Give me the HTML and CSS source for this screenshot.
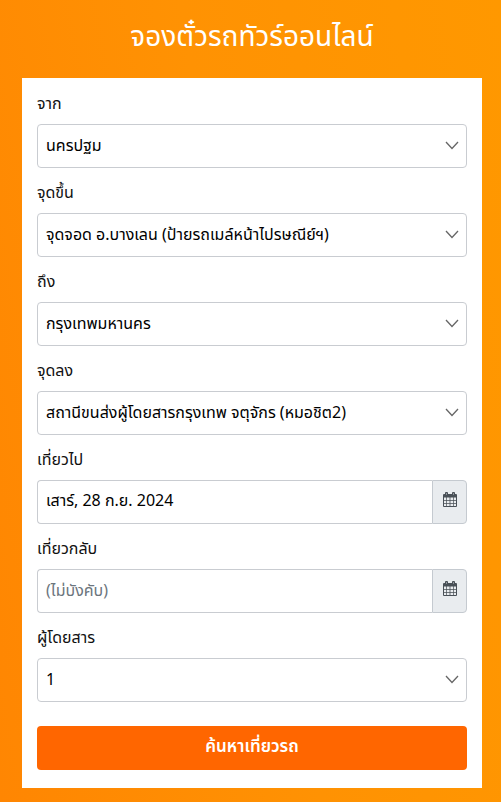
FILE: index.html
```html
<!DOCTYPE html>
<html lang="th">
<head>
  <meta charset="UTF-8">
  <meta name="viewport" content="width=device-width, initial-scale=1.0">
  <title>จองตั๋วรถทัวร์ออนไลน์</title>
  <link rel="stylesheet" href="styles.css">
</head>
<body>
  <h1 class="title">จองตั๋วรถทัวร์ออนไลน์</h1>
  <form class="search-box">
    <div class="field">
      <label for="from">จาก</label>
      <div class="select-wrap">
        <select id="from"><option>นครปฐม</option></select>
        <svg class="arrow" viewBox="0 0 14 9"><path d="M1 1l6 6.5L13 1"/></svg>
      </div>
    </div>
    <div class="field">
      <label for="pickup">จุดขึ้น</label>
      <div class="select-wrap">
        <select id="pickup"><option>จุดจอด อ.บางเลน (ป้ายรถเมล์หน้าไปรษณีย์ฯ)</option></select>
        <svg class="arrow" viewBox="0 0 14 9"><path d="M1 1l6 6.5L13 1"/></svg>
      </div>
    </div>
    <div class="field">
      <label for="to">ถึง</label>
      <div class="select-wrap">
        <select id="to"><option>กรุงเทพมหานคร</option></select>
        <svg class="arrow" viewBox="0 0 14 9"><path d="M1 1l6 6.5L13 1"/></svg>
      </div>
    </div>
    <div class="field">
      <label for="dropoff">จุดลง</label>
      <div class="select-wrap">
        <select id="dropoff"><option>สถานีขนส่งผู้โดยสารกรุงเทพ จตุจักร (หมอชิต2)</option></select>
        <svg class="arrow" viewBox="0 0 14 9"><path d="M1 1l6 6.5L13 1"/></svg>
      </div>
    </div>
    <div class="field">
      <label for="depart">เที่ยวไป</label>
      <div class="date-group">
        <input type="text" id="depart" value="เสาร์, 28 ก.ย. 2024">
        <button type="button" class="date-btn" aria-label="เที่ยวไป">
          <svg class="calendar" viewBox="0 0 14 15"><path fill-rule="evenodd" d="M1 2h1V1q0-1 1-1h1q1 0 1 1v1h4V1q0-1 1-1h1q1 0 1 1v1h1q1 0 1 1v11q0 1-1 1H1q-1 0-1-1V3q0-1 1-1zM1 5.500V8h2.300V5.500zM4 5.500V8h2.600V5.500zM7.400 5.500V8H10V5.500zM10.700 5.500V8H13V5.500zM1 8.700v2.300h2.300V8.700zM4 8.700v2.300h2.600V8.700zM7.400 8.700v2.300H10V8.700zM10.700 8.700v2.300H13V8.700zM1 11.700V14h2.300v-2.300zM4 11.700V14h2.600v-2.300zM7.400 11.700V14H10v-2.300zM10.700 11.700V14H13v-2.300z"/><path class="ring" d="M3 1h1v2H3zM10 1h1v2h-1z"/></svg>
        </button>
      </div>
    </div>
    <div class="field">
      <label for="return">เที่ยวกลับ</label>
      <div class="date-group">
        <input type="text" id="return" placeholder="(ไม่บังคับ)">
        <button type="button" class="date-btn" aria-label="เที่ยวกลับ">
          <svg class="calendar" viewBox="0 0 14 15"><path fill-rule="evenodd" d="M1 2h1V1q0-1 1-1h1q1 0 1 1v1h4V1q0-1 1-1h1q1 0 1 1v1h1q1 0 1 1v11q0 1-1 1H1q-1 0-1-1V3q0-1 1-1zM1 5.500V8h2.300V5.500zM4 5.500V8h2.600V5.500zM7.400 5.500V8H10V5.500zM10.700 5.500V8H13V5.500zM1 8.700v2.300h2.300V8.700zM4 8.700v2.300h2.600V8.700zM7.400 8.700v2.300H10V8.700zM10.700 8.700v2.300H13V8.700zM1 11.700V14h2.300v-2.300zM4 11.700V14h2.600v-2.300zM7.400 11.700V14H10v-2.300zM10.700 11.700V14H13v-2.300z"/><path class="ring" d="M3 1h1v2H3zM10 1h1v2h-1z"/></svg>
        </button>
      </div>
    </div>
    <div class="field">
      <label for="passengers">ผู้โดยสาร</label>
      <div class="select-wrap">
        <select id="passengers"><option>1</option></select>
        <svg class="arrow" viewBox="0 0 14 9"><path d="M1 1l6 6.5L13 1"/></svg>
      </div>
    </div>
    <button type="submit" class="search-btn">ค้นหาเที่ยวรถ</button>
  </form>
</body>
</html>
```
FILE: styles.css
```css
*{
  box-sizing: border-box;
}

body{
  margin: 0;
  padding: 0 19px 14px 22px;
  min-height: 100vh;
  background: linear-gradient(80deg, #ff8602, #ff9203 50%, #ff9800);
  color: #111;
  font-family: "Noto Sans", "Noto Sans Thai", sans-serif;
  font-size: 16px;
}

.title{
  margin: 0;
  height: 78px;
  padding-top: 14px;
  color: #fff;
  font-size: 28px;
  font-weight: 400;
  line-height: 42px;
  text-align: center;
}

.search-box{
  padding: 13px 15px 18px;
  background: #fff;
}

.field{
  margin-bottom: 12px;
}

.field label{
  display: block;
  margin-bottom: 9px;
  line-height: 24px;
}

.select-wrap{
  position: relative;
}

.select-wrap select,
.date-group input{
  display: block;
  width: 100%;
  height: 44px;
  margin: 0;
  padding: 0 8px 2px;
  border: 1px solid #c9ccd1;
  border-radius: 4px;
  background: #fff;
  color: #000;
  font: inherit;
  appearance: none;
}

.arrow{
  position: absolute;
  top: 17px;
  right: 8px;
  width: 14px;
  height: 9px;
  fill: none;
  stroke: #666;
  stroke-width: 1.3;
  pointer-events: none;
}

.date-group{
  display: flex;
}

.date-group input{
  flex: 1;
  min-width: 0;
  border-right: 0;
  border-radius: 4px 0 0 4px;
}

.date-group input::placeholder{
  color: #6c757d;
  opacity: 1;
}

.date-btn{
  display: flex;
  align-items: center;
  justify-content: center;
  width: 35px;
  height: 44px;
  padding: 0 0 6px;
  border: 1px solid #c5cad0;
  border-radius: 0 4px 4px 0;
  background: #e9ecef;
}

.calendar{
  width: 14px;
  height: 15px;
  fill: #495057;
}

.calendar .ring{
  fill: #8c9298;
}

.search-btn{
  display: block;
  width: 100%;
  height: 44px;
  margin-top: 24px;
  padding: 0 0 2px;
  border: 0;
  border-radius: 4px;
  background: #ff6600;
  color: #fff;
  font: inherit;
  font-size: 17px;
  font-weight: 600;
}
```
